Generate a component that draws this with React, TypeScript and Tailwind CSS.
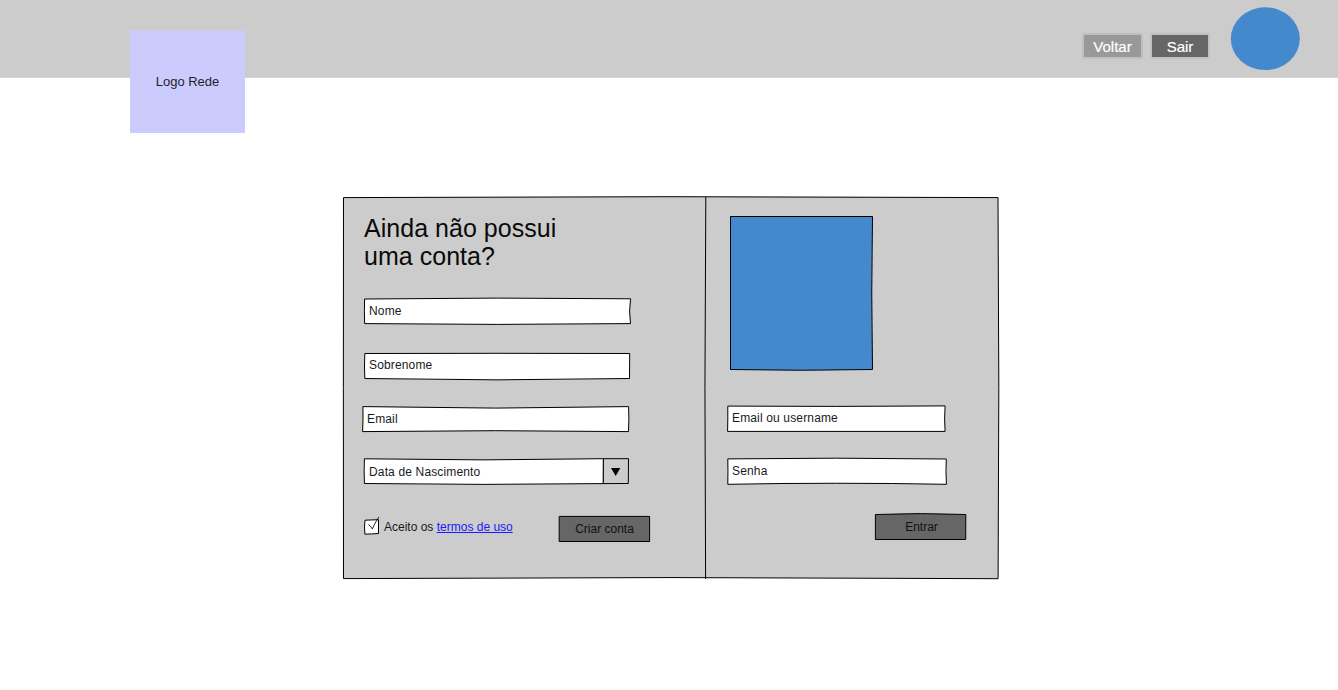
import type { ReactNode } from "react";

type SketchProps = {
  d: string;
  fill: string;
  className: string;
  children?: ReactNode;
  extra?: ReactNode;
};

// A box whose outline is a slightly wobbly hand-drawn path.
function Sketch({ d, fill, className, children, extra }: SketchProps) {
  return (
    <div className={`relative isolate shrink-0 ${className}`}>
      <svg
        className="pointer-events-none absolute inset-0 -z-10 h-full w-full overflow-visible"
        aria-hidden="true"
      >
        <path d={d} fill={fill} stroke="#000" strokeWidth="1" strokeLinejoin="round" />
        {extra}
      </svg>
      {children}
    </div>
  );
}

const text = "text-[12px] leading-[14px] whitespace-nowrap";
const label = `${text} tracking-[0.15px] text-[#1a1a1a]`;

function Header() {
  return (
    <header className="flex h-[78px] items-start justify-between border-b border-[#d4d4d4] bg-[#cccccc] pl-[130px] pr-[38px]">
      <div className="mt-[30px] flex h-[103px] w-[115px] items-center justify-center border-t border-[#cbcbe6] bg-[#cbcbfd]">
        <span className="text-[13px] leading-4 text-[#1f1f2a]">Logo Rede</span>
      </div>
      <nav className="flex items-start text-[15px] leading-[22px] text-white [-webkit-text-stroke:0.2px_white]">
        <button className="mt-[33px] h-[26px] w-[61px] border-2 border-[#c0c0c0] bg-[#999999] pt-px">Voltar</button>
        <button className="ml-[7px] mt-[33px] h-[26px] w-[60px] border-2 border-[#c0c0c0] bg-[#666666] pt-px">Sair</button>
        <svg className="ml-[20px] mt-[7px] h-[64px] w-[70px]" viewBox="0 0 70 64">
          <ellipse cx="35.3" cy="31.7" rx="34.5" ry="31.4" fill="#4589cd" />
        </svg>
      </nav>
    </header>
  );
}

function SignUp() {
  return (
    <section className="flex w-[362px] flex-col items-start pl-[21px] pt-[17px]">
      <h1 className="w-[240px] text-[25px] leading-[28px] tracking-[0.03px] text-[#0a0a0a]">
        Ainda não possui
        <br />
        uma conta?
      </h1>
      <Sketch
        className="mt-[28px] h-[26px] w-[267px] pl-[5px] pt-[6px]"
        fill="#fff"
        d="M.6 1 Q133 -.7 266.6 .8 Q264.6 13 266.5 25.6 Q133 27.2 .6 25.6 Q.2 13 .6 1Z"
      >
        <p className={label}>Nome</p>
      </Sketch>
      <Sketch
        className="mt-[28px] h-[27px] w-[266px] pl-[5px] pt-[6px]"
        fill="#fff"
        d="M.8 1.5 Q133 1.1 265.7 1.5 L265.5 26.5 Q133 29.2 .8 26.5 Q.2 14 .8 1.5Z"
      >
        <p className={label}>Sobrenome</p>
      </Sketch>
      <Sketch
        className="-ml-[2px] mt-[27px] h-[26px] w-[267px] pl-[5px] pt-[6px]"
        fill="#fff"
        d="M.9 .6 Q133 3.6 266.6 .6 Q267.2 13 266.5 25.6 Q133 23.8 .6 25.6 Q1.3 13 .9 .6Z"
      >
        <p className={label}>Email</p>
      </Sketch>
      <Sketch
        className="mt-[26px] flex h-[26px] w-[265px] pl-[5px] pt-[7px]"
        fill="#fff"
        d="M.4 .8 Q120 3 239.4 .7 L239.3 25.6 Q120 27.2 .4 25.5 Q-.1 13 .4 .8Z"
        extra={
          <>
            <path d="M239.4 .7 L264.5 .7 L264.3 25.5 L239.3 25.6Z" fill="#ccc" stroke="#000" strokeWidth="1" />
            <path d="M247 10 H256.3 L251.7 18Z" fill="#000" />
          </>
        }
      >
        <p className={label}>Data de Nascimento</p>
      </Sketch>
      <div className="mt-[31px] flex items-start">
        <Sketch
          className="mt-[5px] h-[14px] w-[15px]"
          fill="#fff"
          d="M1 .2 L14.5 -.3 L14.5 13.5 Q7 14 .9 14.2 L.5 7Z"
          extra={
            <path d="M4.4 4.5 Q7 6.5 8.3 8.9 Q10.5 3.6 14.9 -3" fill="none" stroke="#000" strokeWidth=".85" />
          }
        />
        <p className={`${text} ml-[5px] mt-[5px] w-[175px] text-[#1a1a1a]`}>
          Aceito os <a className="text-[#1a1aff] underline" href="#termos">termos de uso</a>
        </p>
        <Sketch
          className="mt-px flex h-[26px] w-[91px] items-center justify-center"
          fill="#666"
          d="M.2 .4 L90.6 .4 L90.6 25.5 L.2 25.5Z"
        >
          <button className={`${text} text-[#111]`}>Criar conta</button>
        </Sketch>
      </div>
    </section>
  );
}

function Login() {
  return (
    <section className="flex w-[294px] flex-col items-start pl-[22px] pt-[19px]">
      <Sketch
        className="ml-[3px] h-[154px] w-[143px]"
        fill="#4589cd"
        d="M.5 .5 L142.5 .5 Q141 77 142.5 153.5 Q71 155 .5 153.5Z"
      />
      <Sketch
        className="mt-[35px] h-[27px] w-[218px] pl-[5px] pt-[6px]"
        fill="#fff"
        d="M.8 1.1 Q109 1.8 218.1 .9 Q217.1 14 218.1 26.4 L.6 26.4 Q.9 14 .8 1.1Z"
      >
        <p className={label}>Email ou username</p>
      </Sketch>
      <Sketch
        className="mt-[26px] h-[26px] w-[219px] pl-[5px] pt-[6px]"
        fill="#fff"
        d="M.8 .9 Q109 -.6 219.3 1 Q218.6 13 219.4 26.3 Q109 24.2 .8 26.3 Q1.1 13 .8 .9Z"
      >
        <p className={label}>Senha</p>
      </Sketch>
      <Sketch
        className="ml-[148px] mt-[30px] flex h-[26px] w-[91px] items-center justify-center"
        fill="#666"
        d="M.4 .5 Q45 -1.3 90.8 .5 L90.7 25.5 L.4 25.5Z"
      >
        <button className={`${text} pl-[2px] text-[#111]`}>Entrar</button>
      </Sketch>
    </section>
  );
}

export default function App() {
  return (
    <div className="h-[690px] w-full overflow-hidden bg-white font-['Liberation_Sans',Arial,sans-serif]">
      <Header />
      <main className="pl-[343px] pt-[119px]">
        <Sketch
          className="flex h-[382px] w-[656px]"
          fill="#ccc"
          d="M.5 .6 Q328 -1.2 655 .6 Q656.6 190 655.1 381.7 Q328 379.5 .5 381.6 Q.2 190 .5 .6Z"
          extra={<path d="M362.8 0 Q361.2 190 362.6 382" fill="none" stroke="#000" strokeWidth="1" />}
        >
          <SignUp />
          <Login />
        </Sketch>
      </main>
    </div>
  );
}
